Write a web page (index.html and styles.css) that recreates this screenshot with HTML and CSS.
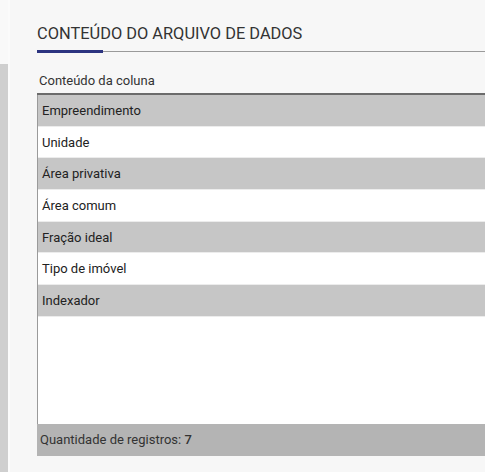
FILE: index.html
```html
<!DOCTYPE html>
<html lang="pt-BR">
<head>
<meta charset="utf-8">
<title>Conteúdo do arquivo de dados</title>
<link rel="stylesheet" href="styles.css">
</head>
<body>
<div class="page">
  <div class="rail"><div class="rail-bar"></div></div>
  <div class="rail-gap"></div>
  <main class="main">
    <h1 class="title">CONTEÚDO DO ARQUIVO DE DADOS</h1>
    <div class="title-rule"><span class="title-accent"></span></div>
    <div class="col-label">Conteúdo da coluna</div>
    <div class="table">
      <div class="rows">
        <div class="row odd">Empreendimento</div>
        <div class="row">Unidade</div>
        <div class="row odd">Área privativa</div>
        <div class="row">Área comum</div>
        <div class="row odd">Fração ideal</div>
        <div class="row">Tipo de imóvel</div>
        <div class="row odd">Indexador</div>
      </div>
      <div class="footer">Quantidade de registros: <b>7</b></div>
    </div>
  </main>
</div>
</body>
</html>
```

FILE: styles.css
```css
html, body {
  margin: 0;
  padding: 0;
  height: 100%;
  overflow: hidden;
  background: #f7f7f7;
  font-family: Roboto, "Liberation Sans", Arial, sans-serif;
  color: #222;
}
.page {
  display: flex;
  height: 472px;
}
.rail {
  width: 8px;
  flex: none;
  padding-top: 64px;
  box-sizing: border-box;
  background: #f9f9f9;
}
.rail-bar {
  height: 100%;
  background: #cfcfcf;
}
.rail-gap {
  width: 2px;
  flex: none;
  background: #fbfbfb;
}
.main {
  flex: none;
  width: 475px;
  padding-left: 27px;
  padding-top: 24px;
  box-sizing: border-box;
  min-width: 0;
}
.title {
  margin: 0;
  font-size: 16.4px;
  font-weight: 400;
  line-height: 20px;
  color: #333;
  letter-spacing: 0;
  white-space: nowrap;
}
.title-rule {
  margin-top: 6px;
  height: 3px;
  position: relative;
  display: flex;
  align-items: center;
}
.title-rule::before {
  content: "";
  display: block;
  width: 100%;
  height: 1px;
  background: #9a9a9a;
}
.title-accent {
  position: absolute;
  left: 0;
  top: 0;
  width: 66px;
  height: 3px;
  background: #2c3480;
}
.col-label {
  margin-top: 20px;
  padding-left: 2px;
  font-size: 13px;
  line-height: 16px;
  color: #333;
}
.table {
  margin-top: 4px;
  border-top: 2px solid #6b6b6b;
}
.rows {
  height: 329px;
  background: #fff;
  border-left: 1px solid #9a9a9a;
}
.row {
  height: 28.67px;
  line-height: 28.67px;
  padding-top: 2px;
  padding-left: 4px;
  font-size: 13px;
  color: #222;
  border-bottom: 1px solid #ececec;
}
.row.odd {
  background: #c6c6c6;
}
.footer {
  height: 32px;
  line-height: 32px;
  background: #b4b4b4;
  padding-left: 3px;
  font-size: 13px;
  color: #333;
}
.footer b {
  font-weight: 500;
}
```
